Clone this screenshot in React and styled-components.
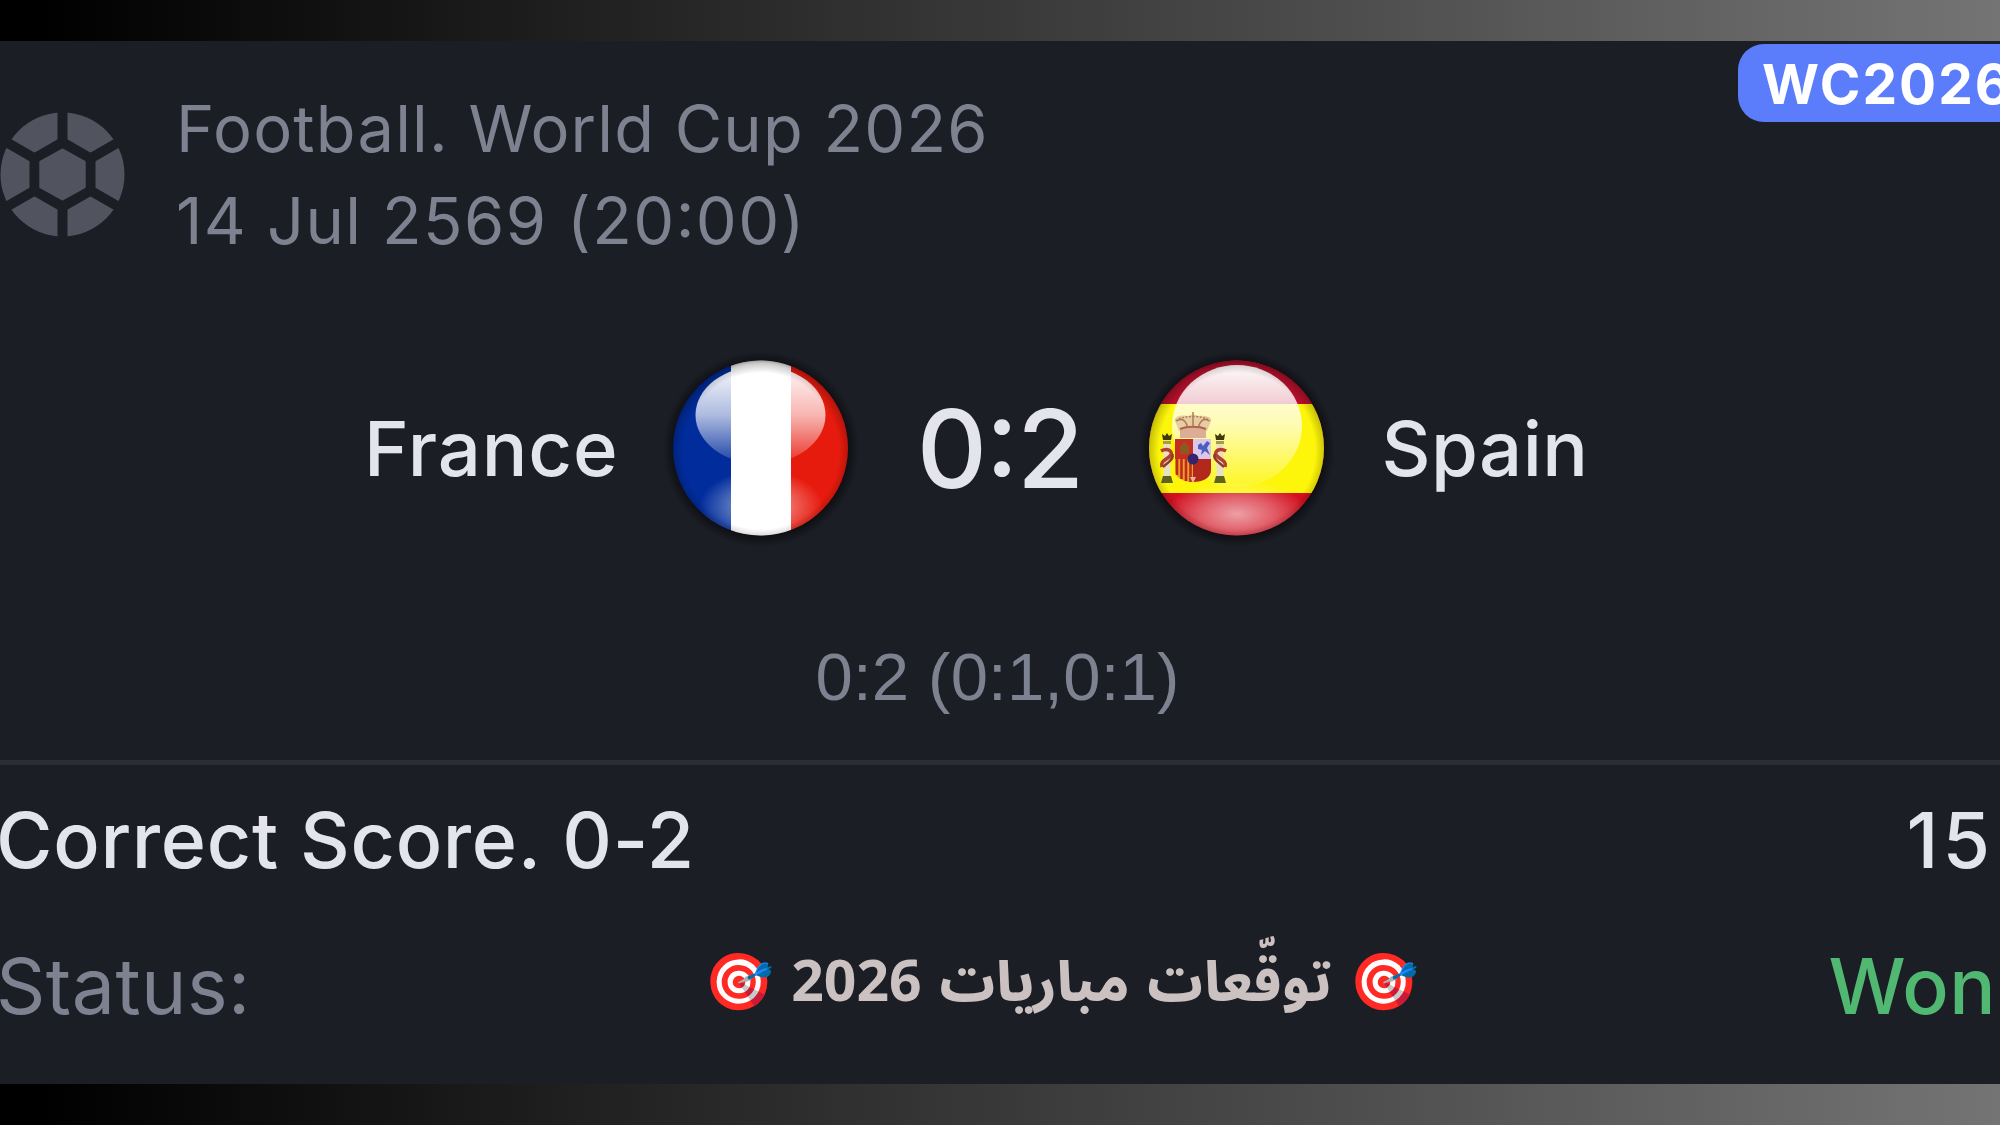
import React from 'react'
import styled, { createGlobalStyle } from 'styled-components'

const App = () => {
  return (
    <Page>
      <GlobalStyle />
      <Card>
        <Badge>WC2026</Badge>

        <Header>
          <BallIcon />
          <Meta>
            <MetaLine $spacing="1.2px">Football. World Cup 2026</MetaLine>
            <MetaLine $spacing="1.4px">14 Jul 2569 (20<Colon>:</Colon>00)</MetaLine>
          </Meta>
        </Header>

        <Match>
          <Team $spacing="0.9px">France</Team>
          <FranceFlag />
          <Score>0<Colon>:</Colon>2</Score>
          <SpainFlag />
          <Team $spacing="0.4px">Spain</Team>
        </Match>
        <Periods>0:2 (0:1,0:1)</Periods>

        <Divider />

        <BetRow>
          <BetText>Correct Score. 0-2</BetText>
          <Odds>15</Odds>
        </BetRow>
        <StatusRow>
          <StatusLabel>Status:</StatusLabel>
          <Caption dir="rtl">
            <Emoji>🎯</Emoji>
            <Word>توقّعات</Word>
            <Word>مباريات</Word>
            <Year>2026</Year>
            <Emoji>🎯</Emoji>
          </Caption>
          <StatusValue>Won</StatusValue>
        </StatusRow>
      </Card>
    </Page>
  )
}

export default App

const BallIcon = () => (
  <BallSvg viewBox="-62.5 -62.5 125 125">
    <mask id="ballMask">
      <circle r="62" fill="#fff" />
      <g stroke="#000" strokeWidth="10">
        <path d="M0 -70V70M-60.6 -35L60.6 35M-60.6 35L60.6 -35" />
      </g>
      <path d="M0 -38L33 -19V19L0 38L-33 19V-19Z" fill="#000" />
      <path
        d="M0 -24.500L21.7 -12.5V12.5L0 24.500L-21.7 12.5V-12.5Z"
        fill="#fff"
        stroke="#fff"
        strokeWidth="3"
        strokeLinejoin="round"
      />
    </mask>
    <rect x="-62.5" y="-62.5" width="125" height="125" fill="#51535f" mask="url(#ballMask)" />
  </BallSvg>
)

// shared gradients of the glossy round flags
const Gloss = ({ id }) => (
  <defs>
    <clipPath id={`${id}Clip`}>
      <circle cx="99.500" cy="100" r="87.500" />
    </clipPath>
    <linearGradient id={`${id}Shine`} x1="0" y1="0" x2="0" y2="1">
      <stop offset="0" stopColor="#fff" stopOpacity="0.98" />
      <stop offset="0.5" stopColor="#fff" stopOpacity="0.68" />
      <stop offset="1" stopColor="#fff" stopOpacity="0.1" />
    </linearGradient>
    <radialGradient id={`${id}Glow`}>
      <stop offset="0" stopColor="#fff" stopOpacity="0.6" />
      <stop offset="0.5" stopColor="#fff" stopOpacity="0.33" />
      <stop offset="1" stopColor="#fff" stopOpacity="0" />
    </radialGradient>
    <radialGradient id={`${id}Edge`} gradientUnits="userSpaceOnUse" cx="100" cy="103" r="93">
      <stop offset="0.84" stopColor="#000" stopOpacity="0" />
      <stop offset="0.94" stopColor="#000" stopOpacity="0.2" />
      <stop offset="1" stopColor="#000" stopOpacity="0.5" />
    </radialGradient>
    <radialGradient id={`${id}Shadow`}>
      <stop offset="0.88" stopColor="#0a0b0e" stopOpacity="0.8" />
      <stop offset="1" stopColor="#0a0b0e" stopOpacity="0" />
    </radialGradient>
  </defs>
)

const FranceFlag = () => (
  <FlagSvg viewBox="0 0 200 200">
    <Gloss id="fr" />
    <circle cx="100" cy="101" r="98" fill="url(#frShadow)" />
    <g clipPath="url(#frClip)">
      <rect width="70" height="200" fill="#002c9c" />
      <rect x="129" width="71" height="200" fill="#e71a0e" />
      <ellipse cx="100" cy="158" rx="62" ry="36" fill="url(#frGlow)" />
      <ellipse cx="99.500" cy="67" rx="65" ry="49" fill="url(#frShine)" />
      <rect x="70" width="60" height="200" fill="#fff" />
      <circle cx="100" cy="100" r="89" fill="url(#frEdge)" />
    </g>
  </FlagSvg>
)

const Pillar = ({ x, flip }) => (
  <g transform={`translate(${x} 0) scale(${flip ? -1 : 1} 1)`}>
    <path d="M-5 86L-2 88L0 85L2 88L5 86L4 92H-4Z" fill="#3d3a12" />
    <rect x="-4" y="93" width="8" height="3" fill="#a79a4a" />
    <rect x="-3.500" y="96" width="7" height="32" fill="#e9dfc4" />
    <path d="M-6 103C1 99 7 104 3 108C-1 112 -7 113 -5 119" fill="none" stroke="#b3402c" strokeWidth="3.500" />
    <path d="M5 106C8 111 0 115 -4 119" fill="none" stroke="#8d3a30" strokeWidth="2.500" />
    <path d="M-4 128H4L6 135H-6Z" fill="#5c6420" />
  </g>
)

const SpainFlag = () => (
  <FlagSvg viewBox="0 0 200 200">
    <Gloss id="es" />
    <circle cx="100" cy="101" r="98" fill="url(#esShadow)" />
    <g clipPath="url(#esClip)">
      <rect width="200" height="200" fill="#d3101f" />
      <rect width="200" height="56" fill="#b8102c" />
      <rect y="56" width="200" height="89" fill="#fdf50a" />
      <ellipse cx="100" cy="166" rx="72" ry="34" fill="url(#esGlow)" />
      <ellipse cx="100" cy="78" rx="65" ry="61" fill="url(#esShine)" />

      {/* crown */}
      <path d="M38 73C37 67 47 67 52 68C55 66 58 66 60 68C66 67 76 68 74 73L70 83H42Z" fill="#e6cda6" />
      <path
        d="M40 73C45 69 50 73 51 82M72 73C67 69 62 73 61 82M56 64V82"
        fill="none"
        stroke="#b07c4c"
        strokeWidth="1.500"
      />
      <path d="M39 73C45 67 67 67 73 73" fill="none" stroke="#b07c4c" strokeWidth="1.500" strokeDasharray="2 1.500" />
      <path d="M43 80C50 77 62 77 69 80V90H43Z" fill="#dcae95" />
      <path d="M43 81C50 78 62 78 69 81" fill="none" stroke="#b0664a" strokeWidth="2" />

      {/* shield */}
      <path d="M38 91H56V111H38Z" fill="#c62c22" />
      <path d="M56 91H74V111H56Z" fill="#d9c6ea" />
      <path d="M38 111H56V134C46 134 38 130 38 122Z" fill="#e8a02c" />
      <path d="M40 111V127M44.500 111V131M49 111V133M53.500 111V134" stroke="#bf2a1c" strokeWidth="2.600" />
      <path d="M56 111H74V122C74 130 66 134 56 134Z" fill="#b3281c" />
      <path d="M43 97H46V94H49V97H52V106H43Z" fill="#8a5a20" />
      <path d="M61 97L64 95L66 98L70 93L73 95L70 100L73 107L68 103L64 107L65 102L61 101Z" fill="#4a5fc0" />
      <circle cx="56" cy="111" r="5.500" fill="#34246e" />
      <path d="M53 129L56 135L59 129Z" fill="#e9b5a0" />
      <Pillar x={30} />
      <Pillar x={83} flip />

      <circle cx="100" cy="100" r="89" fill="url(#esEdge)" />
    </g>
  </FlagSvg>
)

const GlobalStyle = createGlobalStyle`
  body {
    margin: 0;
    background: #000;
    overflow: hidden;
  }
`;

const Page = styled.div`
  box-sizing: border-box;
  width: 2000px;
  height: 1125px;
  padding: 41px 0;
  background: linear-gradient(90deg, #000 2%, #747474 100%);
  font-family: Inter, "Liberation Sans", sans-serif;
`;

const Card = styled.div`
  position: relative;
  box-sizing: border-box;
  height: 1043px;
  padding-top: 42px;
  background: #1b1e25;
  color: #e3e4ec;
  overflow: hidden;
`;

const Badge = styled.div`
  position: absolute;
  top: 3px;
  left: 1738px;
  width: 300px;
  height: 78px;
  box-sizing: border-box;
  padding-left: 24px;
  border-radius: 26px;
  background: #5b7dfc;
  color: #fff;
  font-size: 55px;
  font-weight: 700;
  line-height: 80px;
  letter-spacing: 2px;
`;

const Header = styled.div`
  display: flex;
  align-items: center;
  gap: 51px;
`;

const BallSvg = styled.svg`
  width: 125px;
  height: 125px;
  margin-bottom: 2px;
`;

const Meta = styled.div`
  color: #7e8290;
  font-size: 65px;
  line-height: 92px;
`;

const MetaLine = styled.div`
  letter-spacing: ${(props) => props.$spacing};
  white-space: nowrap;
`;

// colon centred on the height of the digits
const Colon = styled.span`
  font-feature-settings: "case" 1;
`;

const Match = styled.div`
  display: flex;
  align-items: center;
  margin-top: 81px;
  padding-left: 364px;
`;

const FlagSvg = styled.svg`
  width: 200px;
  height: 200px;
`;

const Team = styled.div`
  font-size: 76px;
  font-weight: 500;
  letter-spacing: ${(props) => props.$spacing};

  &:first-child {
    margin-right: 42px;
  }

  &:last-child {
    margin-left: 44px;
  }
`;

const Score = styled.div`
  margin: 0 55px 0 56px;
  font-size: 109px;
  font-weight: 500;
  line-height: 130px;
  letter-spacing: -1.6px;
`;

const Periods = styled.div`
  margin-top: 89px;
  padding-right: 5px;
  color: #7e8290;
  font-family: "Liberation Sans", Arial, sans-serif;
  font-size: 67px;
  line-height: 80px;
  letter-spacing: 0.2px;
  text-align: center;
`;

const Divider = styled.div`
  height: 5px;
  margin-top: 43px;
  background: #2b2e37;
`;

const BetRow = styled.div`
  display: flex;
  justify-content: space-between;
  margin-top: 30px;
  font-size: 77px;
  font-weight: 500;
  line-height: 90px;
`;

const BetText = styled.div`
  margin-left: -4px;
  letter-spacing: 0.7px;
`;

const Odds = styled.div`
  margin-right: 6px;
  letter-spacing: 4px;
`;

const StatusRow = styled.div`
  display: flex;
  justify-content: space-between;
  margin-top: 56px;
  font-size: 77px;
  line-height: 90px;
`;

const StatusLabel = styled.div`
  margin-left: -4px;
  color: #7e8290;
  letter-spacing: 0.4px;
`;

const StatusValue = styled.div`
  margin-right: 4px;
  color: #50b871;
  font-weight: 500;
  letter-spacing: 0.4px;
`;

const Caption = styled.div`
  display: flex;
  align-items: baseline;
  gap: 17px;
  height: 80px;
  margin-top: -2px;
  margin-left: 44px;
  color: #cbc1c1;
  font-family: "Open Sans", sans-serif;
  font-weight: 700;
  line-height: 80px;
`;

const Emoji = styled.span`
  font-size: 56px;
`;

const Word = styled.span`
  font-family: "Noto Sans Arabic", sans-serif;
  font-size: 55px;
  font-weight: 800;
`;

const Year = styled.span`
  font-size: 57px;
`;
